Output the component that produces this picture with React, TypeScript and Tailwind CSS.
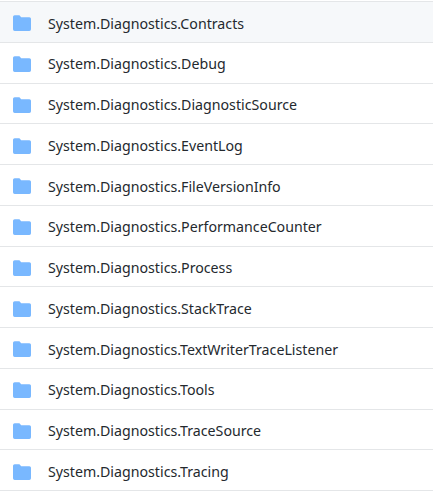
const items=["Contracts","Debug","DiagnosticSource","EventLog","FileVersionInfo","PerformanceCounter","Process","StackTrace","TextWriterTraceListener","Tools","TraceSource","Tracing"];
export default function App(){return(<div className="w-[433px] h-[492px] bg-white pt-[1px]" style={{fontFamily:'"Noto Sans", sans-serif'}}>
<div className="border-t border-[#e4e6e8]">
{items.map((n,i)=>(<div key={n} className={`flex items-center h-[40.75px] pt-[3px] border-b border-[#e4e6e8] ${i===0?"bg-[#f6f8fa]":""}`}>
<svg className="ml-[13px] mr-[17px]" width="18" height="16" viewBox="0 0 16 14"><path fill="#79b8ff" d="M1.5 0h4.2l1.6 1.8H14.5A1.5 1.5 0 0 1 16 3.3v9.2a1.5 1.5 0 0 1-1.5 1.5h-13A1.5 1.5 0 0 1 0 12.5v-11A1.5 1.5 0 0 1 1.5 0z"/></svg>
<span className="text-[14.2px] text-[#24292e]">System.Diagnostics.{n}</span></div>))}
</div></div>)}
